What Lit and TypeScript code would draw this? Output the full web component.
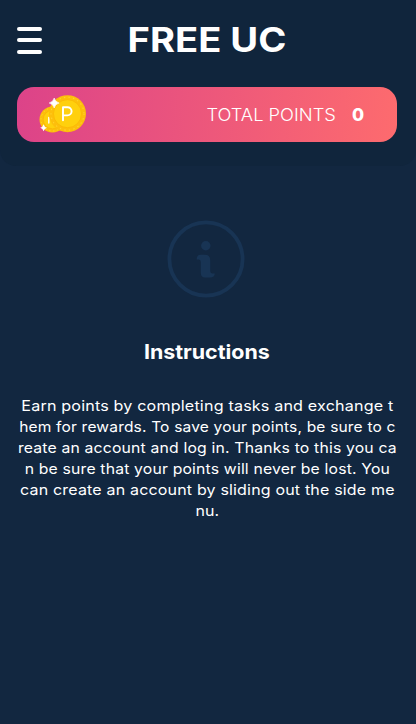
import { LitElement, html, css, svg } from "lit";
import { customElement } from "lit/decorators.js";

const LINES = [
  { text: "Earn points by completing tasks and exchange t", stretch: 1.112 },
  { text: "hem for rewards. To save your points, be sure to c", stretch: 1.073 },
  { text: "reate an account and log in. Thanks to this you ca", stretch: 1.089 },
  { text: "n be sure that your points will never be lost. You", stretch: 1.088 },
  { text: "can create an account by sliding out the side me", stretch: 1.105 },
  { text: "nu.", stretch: 1.1 },
];

const coins = svg`
  <svg class="coins" viewBox="0 0 48 38" width="48" height="38">
    <circle cx="13.5" cy="24.5" r="13" fill="#fdbf0b"/>
    <circle cx="13.5" cy="24.5" r="11.5" fill="none" stroke="#ffd52e" stroke-width="1" stroke-dasharray="1.4 2.6"/>
    <circle cx="13.5" cy="24.5" r="9.3" fill="#ffd00d" stroke="#f9b404" stroke-width=".7"/>
    <path d="M9.8 22.5v5.5" stroke="#fff" stroke-width="1.4" stroke-linecap="round"/>
    <circle cx="28.5" cy="18.7" r="18.5" fill="#fdbf0b"/>
    <circle cx="28.5" cy="18.7" r="16.5" fill="none" stroke="#ffd22e" stroke-width="1.1" stroke-dasharray="1.4 3.2"/>
    <circle cx="28.5" cy="18.7" r="14" fill="#ffd00d" stroke="#f9b404" stroke-width=".7"/>
    <path d="M24 25.3V12.2h4.5a4 4 0 0 1 0 8.2H24" fill="none" stroke="#fff" stroke-width="1.9" stroke-linecap="round" stroke-linejoin="round"/>
    <path d="M15.2 3q1 4 5 5-4 1-5 5-1-4-5-5 4-1 5-5Z" fill="#fff" stroke="#fff" stroke-width=".6"/>
    <path d="M4.6 29.2q.7 2.8 3.4 3.5-2.7.7-3.4 3.5-.7-2.8-3.4-3.5 2.7-.7 3.4-3.5Z" fill="#fff"/>
  </svg>`;

const info = svg`
  <svg class="info" viewBox="0 0 78 78" width="78" height="78">
    <circle cx="39" cy="39" r="36.6" fill="none" stroke="#183454" stroke-width="3.8"/>
    <circle cx="38.8" cy="25.7" r="4.7" fill="#183454"/>
    <path d="M33.4 34.8h4.2q5.6 0 5.6 5.2v11q0 2.4 2 2.4h2.6q-.3 4-4.6 4h-5.1q-4.3 0-4.3-4.7V42q0-2.5-2-2.5h-2.2q.2-4.7 3.8-4.7Z" fill="#183454"/>
  </svg>`;

@customElement("app-root")
export class AppRoot extends LitElement {
  static styles = css`
    :host {
      display: block;
      min-height: 724px;
      background: #122740;
      color: #fff;
      font-family: Inter, "Open Sans", sans-serif;
    }
    header {
      box-sizing: border-box;
      height: 166px;
      padding: 0 19px 0 17px;
      background: #10253c;
      border-radius: 0 0 16px 16px;
    }
    .top {
      display: grid;
      grid-template-columns: 25px 1fr 25px;
      align-items: center;
      height: 80px;
    }
    .menu {
      display: grid;
      gap: 7.5px;
    }
    .menu i {
      height: 4px;
      border-radius: 2px;
      background: #fff;
    }
    h1 {
      margin: 0;
      font-size: 33.5px;
      line-height: 40px;
      font-weight: 700;
      text-align: center;
      white-space: nowrap;
      transform: scaleX(1.137);
    }
    .points {
      box-sizing: border-box;
      display: flex;
      align-items: center;
      height: 55px;
      margin-top: 7px;
      padding: 0 33px 0 22px;
      border-radius: 17px;
      background: linear-gradient(95deg, #dc4389, #fd6b6e);
      font-size: 17.5px;
    }
    .coins {
      margin-top: -2px;
    }
    .label {
      margin-left: auto;
      margin-right: 16px;
      font-weight: 300;
      transform: scaleX(1.045);
      transform-origin: right;
    }
    .value {
      font-weight: 800;
    }
    main {
      display: flex;
      flex-direction: column;
      align-items: center;
      padding-top: 54px;
    }
    .info {
      display: block;
      margin-right: 4px;
    }
    h2 {
      margin: 40px 2px 0 0;
      font-size: 20px;
      line-height: 28px;
      font-weight: 700;
      transform: scaleX(1.07);
    }
    p {
      margin: 29px 2px 0 0;
      font-size: 14.5px;
      line-height: 21px;
      letter-spacing: 0.15px;
      text-align: center;
      white-space: nowrap;
    }
    .line {
      display: block;
    }
  `;

  render() {
    return html`
      <header>
        <div class="top">
          <div class="menu"><i></i><i></i><i></i></div>
          <h1>FREE UC</h1>
        </div>
        <div class="points">
          ${coins}
          <span class="label">TOTAL POINTS</span>
          <span class="value">0</span>
        </div>
      </header>
      <main>
        ${info}
        <h2>Instructions</h2>
        <p>${LINES.map((l) => html`<span class="line" style="transform:scaleX(${l.stretch})">${l.text}</span>`)}</p>
      </main>
    `;
  }
}
